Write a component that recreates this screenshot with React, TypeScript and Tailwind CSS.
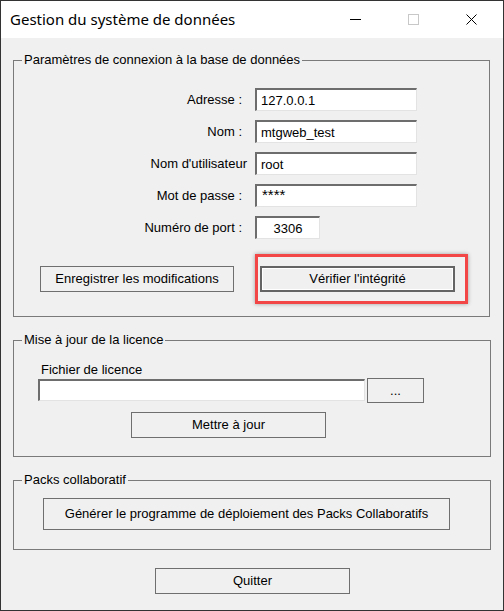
const ui = { fontFamily: '"Liberation Sans", Arial, sans-serif' }
const title = { fontFamily: '"Segoe UI", "Noto Sans", "Open Sans", sans-serif' }

function Field({ value, width, center }: { value: string; width: string; center?: boolean }) {
  return (
    <input
      readOnly
      defaultValue={value}
      className={`${width} h-[23px] bg-white border-t-2 border-l-2 border-b border-r border-t-[#6d6d6d] border-l-[#6d6d6d] border-b-[#e3e3e3] border-r-[#e3e3e3] pl-[4px] text-[13px] text-black outline-none ${center ? 'text-center pr-[4px]' : ''}`}
    />
  )
}

function Btn({ children, className = '' }: { children: React.ReactNode; className?: string }) {
  return (
    <button className={`border border-[#6f6f6f] bg-[#f0f0f0] text-[13px] text-black flex items-center justify-center ${className}`}>
      {children}
    </button>
  )
}

function Row({ label, colon = true, children }: { label: string; colon?: boolean; children: React.ReactNode }) {
  return (
    <div className="flex items-center h-[23px]">
      <div className={`w-[233px] text-right text-[13px] ${colon ? 'pr-[5px]' : ''}`}>{label}</div>
      <div className="ml-[8px] flex">{children}</div>
    </div>
  )
}

export default function App() {
  return (
    <div className="w-[504px] h-[611px] border border-[#333] flex flex-col text-black" style={ui}>
      {/* title bar */}
      <div className="h-[37px] bg-white flex items-center shrink-0">
        <div className="pl-[9px] text-[15px] flex-1" style={title}>Gestion du système de données</div>
        <div className="flex h-full pr-[3px]">
          <div className="w-[58px] flex items-center justify-center">
            <div className="w-[11px] h-px bg-black" />
          </div>
          <div className="w-[58px] flex items-center justify-center">
            <div className="w-[11px] h-[11px] border border-[#c8c8c8]" />
          </div>
          <div className="w-[58px] flex items-center justify-center">
            <svg width="11" height="11" viewBox="0 0 11 11">
              <path d="M0.5 0.5 L10.5 10.5 M10.5 0.5 L0.5 10.5" stroke="#000" strokeWidth="1" />
            </svg>
          </div>
        </div>
      </div>

      <div className="flex-1 bg-[#f0f0f0] px-[12px] flex flex-col">
        {/* connexion */}
        <fieldset className="mt-[14px] w-[477px] border border-[#7a7a7a] pb-[24px]">
          <legend className="ml-[8px] px-[2px] text-[13px] leading-[16px]">Paramètres de connexion à la base de données</legend>
          <div className="mt-[20px] flex flex-col gap-[9px]">
            <Row label="Adresse :"><Field value="127.0.0.1" width="w-[162px]" /></Row>
            <Row label="Nom :"><Field value="mtgweb_test" width="w-[162px]" /></Row>
            <Row label="Nom d'utilisateur" colon={false}><Field value="root" width="w-[162px]" /></Row>
            <Row label="Mot de passe :">
              <input
                readOnly
                defaultValue="****"
                className="w-[162px] h-[23px] bg-white border-t-2 border-l-2 border-b border-r border-t-[#6d6d6d] border-l-[#6d6d6d] border-b-[#e3e3e3] border-r-[#e3e3e3] pl-[5px] pb-[3px] text-[15px] text-black outline-none"
              />
            </Row>
            <Row label="Numéro de port :"><Field value="3306" width="w-[65px]" center /></Row>
          </div>
          <div className="mt-[27px] flex">
            <Btn className="ml-[26px] w-[194px] h-[26px]">Enregistrer les modifications</Btn>
            <div className="relative ml-[26px]">
              <button className="w-[195px] h-[26px] border-2 border-[#646464] bg-[#f0f0f0] shadow-[inset_0_0_0_1px_#ffffff] text-[13px] flex items-center justify-center">
                Vérifier l'intégrité
              </button>
              {/* annotation */}
              <div className="absolute left-[-5px] right-[-13px] top-[-12px] bottom-[-12px] border-[3px] border-[#f24646] shadow-[0_0_4px_rgba(0,0,0,0.35)] pointer-events-none" />
            </div>
          </div>
        </fieldset>

        {/* licence */}
        <fieldset className="mt-[15px] w-[478px] border border-[#7a7a7a] pb-[18px]">
          <legend className="ml-[8px] px-[2px] text-[13px] leading-[16px]">Mise à jour de la licence</legend>
          <div className="mt-[14px] ml-[27px] text-[13px] leading-[16px]">Fichier de licence</div>
          <div className="flex items-start">
            <input
              readOnly
              className="ml-[24px] mt-px w-[327px] h-[22px] bg-white border-t-2 border-l-2 border-b border-r border-t-[#6d6d6d] border-l-[#6d6d6d] border-b-[#e3e3e3] border-r-[#e3e3e3] outline-none"
            />
            <Btn className="ml-[2px] w-[57px] h-[25px]">...</Btn>
          </div>
          <Btn className="mt-[9px] ml-[117px] w-[195px] h-[26px]">Mettre à jour</Btn>
        </fieldset>

        {/* packs */}
        <fieldset className="mt-[15px] w-[478px] border border-[#7a7a7a] pb-[19px]">
          <legend className="ml-[8px] px-[2px] text-[13px] leading-[16px]">Packs collaboratif</legend>
          <Btn className="mt-[10px] ml-[29px] w-[407px] h-[32px]">Générer le programme de déploiement des Packs Collaboratifs</Btn>
        </fieldset>

        <Btn className="mt-[18px] ml-[142px] w-[195px] h-[26px]">Quitter</Btn>
      </div>
    </div>
  )
}
